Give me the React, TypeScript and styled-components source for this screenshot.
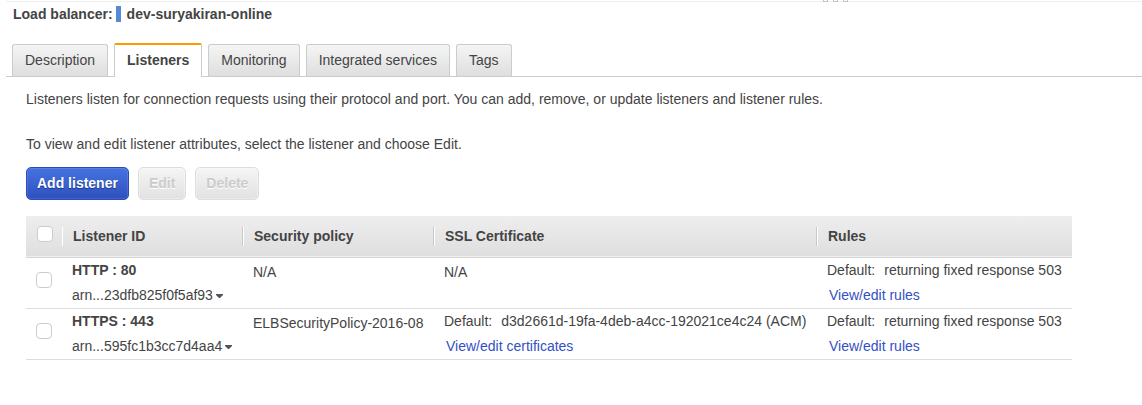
import React, { useState } from "react";
import styled, { createGlobalStyle, css } from "styled-components";

const GlobalStyle = createGlobalStyle`
  *, *::before, *::after { box-sizing: border-box; }
  body {
    margin: 0;
    background: #fff;
    color: #444;
    font: 14px/20px "Liberation Sans", Arial, sans-serif;
  }
  button, input { font: inherit; margin: 0; }
`;

const Panel = styled.main`
  padding-left: 6px;
`;

const Splitter = styled.div`
  height: 2px;
  border-bottom: 1px solid #eee;
  padding-left: 817px;
`;

const Grip = styled.svg`
  display: block;
`;

const Title = styled.h1`
  display: flex;
  align-items: center;
  margin: 2px 0 0;
  padding-left: 7px;
  font-size: 14px;
  line-height: 20px;
`;

const Marker = styled.span`
  width: 5px;
  height: 16px;
  margin: 0 6px 0 3px;
  background: #5688d4;
`;

const TabList = styled.div`
  display: flex;
  align-items: flex-end;
  gap: 6px;
  margin-top: 19px;
  padding-left: 6px;
  border-bottom: 1px solid #ccc;
`;

const Tab = styled.button<{ $active: boolean }>`
  height: 32px;
  padding: 0 12px 2px;
  border: 1px solid #ccc;
  border-bottom: 0;
  border-radius: 3px 3px 0 0;
  background: linear-gradient(#f5f5f5, #dedede);
  color: #444;
  line-height: 20px;
  cursor: pointer;
  ${(p) =>
    p.$active &&
    css`
      height: 34px;
      margin-bottom: -1px;
      border-top: 2px solid #f90;
      border-radius: 2px 2px 0 0;
      background: #fff;
      font-weight: bold;
    `}
`;

const Content = styled.section`
  padding: 12px 20px;
`;

const Text = styled.p`
  margin: 0 0 25px;
`;

const Hint = styled(Text)`
  margin-bottom: 13px;
`;

const Toolbar = styled.div`
  display: flex;
  gap: 9px;
  margin-bottom: 16px;
`;

const Button = styled.button<{ $primary?: boolean }>`
  height: 33px;
  padding: 0 10px 2px;
  border: 1px solid #ddd;
  border-radius: 5px;
  background: linear-gradient(#f5f5f5, #e1e1e1);
  box-shadow: inset 0 0 0 1px rgba(255, 255, 255, 0.3);
  color: #ccc;
  font-weight: bold;
  text-shadow: 0 1px 0 #fff;
  ${(p) =>
    p.$primary &&
    css`
      border-color: #2a4dba;
      background: linear-gradient(#4573e0, #2f50bf);
      box-shadow: inset 0 0 0 1px rgba(255, 255, 255, 0.1);
      color: #fff;
      text-shadow: 0 1px 1px #1c3580;
      cursor: pointer;
    `}
`;

const Table = styled.table`
  border-collapse: separate;
  border-spacing: 0;
  white-space: nowrap;
  text-align: left;
`;

const Col = styled.col<{ $width: number }>`
  width: ${(p) => p.$width}px;
`;

const HeadCell = styled.th`
  height: 42px;
  padding: 0;
  border-bottom: 1px solid #d5d5d5;
  background: linear-gradient(#eee, #dedede);
  box-shadow: inset 0 -1px 0 #eee;
`;

const HeadLabel = styled.span<{ $first?: boolean }>`
  display: block;
  padding-left: 10px;
  border-left: 1px solid #fff;
  box-shadow: ${(p) => (p.$first ? "none" : "-1px 0 0 #c8c8c8")};
  line-height: 19px;
`;

const HeadCheck = styled.div`
  padding: 0 0 5px 11px;
`;

const Cell = styled.td`
  height: 51px;
  padding: 0 10px;
  border-bottom: 1px solid #ddd;
  vertical-align: top;
  line-height: 25px;
`;

const CheckCell = styled(Cell)`
  padding: 14px 10px 0;
`;

const PlainCell = styled(Cell)`
  padding-top: 2px;
`;

const Checkbox = styled.input`
  appearance: none;
  display: block;
  width: 16px;
  height: 16px;
  border: 1px solid #ccc;
  border-radius: 4px;
  background: #fff;
  &:checked {
    background: #4573e0;
  }
`;

const Line = styled.div`
  display: flex;
  gap: 9px;
`;

const Name = styled.strong`
  display: block;
`;

const ArnButton = styled.button`
  display: flex;
  align-items: center;
  gap: 3px;
  padding: 0;
  border: 0;
  background: none;
  color: #444;
  line-height: 25px;
  cursor: pointer;
`;

const Link = styled.a`
  display: block;
  padding-left: 2px;
  color: #3350c4;
  text-decoration: none;
`;

const Caret = () => (
  <svg width="7" height="4" viewBox="0 0 7 4" aria-hidden="true">
    <path d="M0 0h7v1L4 4H3L0 1z" fill="#555" />
  </svg>
);

const tabs = ["Description", "Listeners", "Monitoring", "Integrated services", "Tags"];

const listeners = [
  { name: "HTTP : 80", arn: "arn...23dfb825f0f5af93", policy: "N/A", certificate: "" },
  {
    name: "HTTPS : 443",
    arn: "arn...595fc1b3cc7d4aa4",
    policy: "ELBSecurityPolicy-2016-08",
    certificate: "d3d2661d-19fa-4deb-a4cc-192021ce4c24 (ACM)",
  },
];

export default function App() {
  const [active, setActive] = useState("Listeners");
  return (
    <>
      <GlobalStyle />
      <Panel>
        <Splitter>
          <Grip width="25" height="2" viewBox="0 0 25 2" aria-hidden="true">
            {[0, 10, 20].map((x) => (
              <path key={x} d={`M${x} 0h1v1h3v-1h1v2h-5z`} fill="#c4c4c4" />
            ))}
          </Grip>
        </Splitter>
        <Title>
          Load balancer:
          <Marker />
          dev-suryakiran-online
        </Title>
        <TabList role="tablist">
          {tabs.map((t) => (
            <Tab
              key={t}
              type="button"
              role="tab"
              aria-selected={t === active}
              $active={t === active}
              onClick={() => setActive(t)}
            >
              {t}
            </Tab>
          ))}
        </TabList>
        <Content>
          <Text>
            Listeners listen for connection requests using their protocol and port. You can add,
            remove, or update listeners and listener rules.
          </Text>
          <Hint>To view and edit listener attributes, select the listener and choose Edit.</Hint>
          <Toolbar>
            <Button type="button" $primary>
              Add listener
            </Button>
            <Button type="button" disabled>
              Edit
            </Button>
            <Button type="button" disabled>
              Delete
            </Button>
          </Toolbar>
          <Table>
            <colgroup>
              <Col $width={36} />
              <Col $width={181} />
              <Col $width={191} />
              <Col $width={383} />
              <Col $width={255} />
            </colgroup>
            <thead>
              <tr>
                <HeadCell>
                  <HeadCheck>
                    <Checkbox type="checkbox" aria-label="Select all listeners" />
                  </HeadCheck>
                </HeadCell>
                <HeadCell scope="col">
                  <HeadLabel $first>Listener ID</HeadLabel>
                </HeadCell>
                <HeadCell scope="col">
                  <HeadLabel>Security policy</HeadLabel>
                </HeadCell>
                <HeadCell scope="col">
                  <HeadLabel>SSL Certificate</HeadLabel>
                </HeadCell>
                <HeadCell scope="col">
                  <HeadLabel>Rules</HeadLabel>
                </HeadCell>
              </tr>
            </thead>
            <tbody>
              {listeners.map((l) => (
                <tr key={l.name}>
                  <CheckCell>
                    <Checkbox type="checkbox" aria-label={`Select ${l.name}`} />
                  </CheckCell>
                  <Cell>
                    <Name>{l.name}</Name>
                    <ArnButton type="button">
                      {l.arn}
                      <Caret />
                    </ArnButton>
                  </Cell>
                  <PlainCell>{l.policy}</PlainCell>
                  {l.certificate ? (
                    <Cell>
                      <Line>
                        <span>Default:</span>
                        <span>{l.certificate}</span>
                      </Line>
                      <Link href="#certificates">View/edit certificates</Link>
                    </Cell>
                  ) : (
                    <PlainCell>N/A</PlainCell>
                  )}
                  <Cell>
                    <Line>
                      <span>Default:</span>
                      <span>returning fixed response 503</span>
                    </Line>
                    <Link href="#rules">View/edit rules</Link>
                  </Cell>
                </tr>
              ))}
            </tbody>
          </Table>
        </Content>
      </Panel>
    </>
  );
}
